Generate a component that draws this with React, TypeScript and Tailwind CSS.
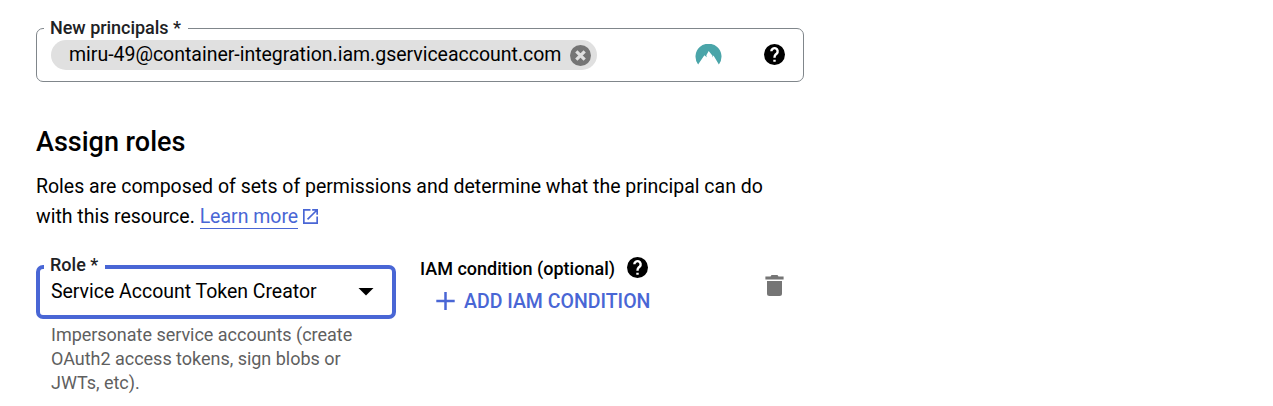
import type { ReactNode } from 'react';

function HelpIcon() {
  return (
    <svg viewBox="2 2 20 20" className="size-[21px] shrink-0" aria-hidden="true">
      <circle cx="12" cy="12" r="10" fill="#000" />
      <path d="M9 9a3 3 0 1 1 5.1 2.1l-1.1 1.1c-.7.7-1 1.2-1 2.8M12 17v2" fill="none" stroke="#fff" strokeWidth="2.3" />
    </svg>
  );
}

function CancelIcon() {
  return (
    <svg viewBox="2 2 20 20" className="size-[21px] shrink-0" aria-hidden="true">
      <circle cx="12" cy="12" r="10" fill="#757575" />
      <path d="M8 8l8 8M16 8l-8 8" stroke="#e0e0e0" strokeWidth="3" />
    </svg>
  );
}

function MountainIcon() {
  return (
    <svg viewBox="-0.5 0 27 21" className="h-[21px] w-[27px] shrink-0" aria-hidden="true">
      <path d="M2.6 20.5A13 13 0 1 1 23.4 20.5L18 11.5L16.6 13.4L17 11.8L13.2 7L10.8 11.2L11.3 13.2L8.9 11.3Z" fill="#4aa5a9" />
    </svg>
  );
}

function OpenIcon() {
  return (
    <svg viewBox="3 3 18 18" className="size-[15px] shrink-0" aria-hidden="true">
      <path d="M19 19H5V5h7V3H3v18h18v-9h-2v7zM14 3v2h3.59l-9.83 9.83 1.41 1.41L19 6.41V10h2V3h-7z" fill="#4966d5" />
    </svg>
  );
}

function FieldLabel({ children, className }: { children: ReactNode; className: string }) {
  return (
    <span className={`absolute bg-white px-1.5 text-[18px] leading-[22px] font-medium whitespace-nowrap text-[#202124] ${className}`}>
      {children}
    </span>
  );
}

export default function App() {
  return (
    <main className="h-[406px] w-full overflow-hidden bg-white pt-7 pl-9 font-[Roboto,sans-serif] text-black">
      <section className="relative flex h-[54px] w-[768px] items-center rounded-[7px] border border-[#80868b] pr-[18px] pl-3.5">
        <FieldLabel className="-top-3 left-[7px] w-[144px] tracking-[-0.03px]">New principals *</FieldLabel>
        <div className="flex h-[30px] items-center rounded-full bg-[#e0e0e0] pr-1.5 pl-[18px]">
          <span className="w-[501px] text-[19.5px] leading-[30px] tracking-[-0.015px] whitespace-nowrap">
            miru-49@container-integration.iam.gserviceaccount.com
          </span>
          <CancelIcon />
        </div>
        <div className="mb-px ml-auto flex items-center gap-[42px]">
          <MountainIcon />
          <HelpIcon />
        </div>
      </section>

      <h2 className="mt-11 text-[27px] leading-8 font-medium">Assign roles</h2>

      <p className="mt-3.5 w-[768px] text-[19.5px] leading-[30px] tracking-[-0.008px]">
        Roles are composed of sets of permissions and determine what the principal can do
        <span className="flex h-[30px] items-start">
          <span>with this resource.&nbsp;</span>
          <a className="h-[27px] border-b border-[#4966d5] leading-[30px] text-[#4966d5]">Learn more</a>
          <span className="mt-[7px] ml-[5px] flex"><OpenIcon /></span>
        </span>
      </p>

      <div className="mt-[33px] flex">
        <div className="w-[360px]">
          <div className="relative flex h-[54px] items-center justify-between rounded-[7px] border-4 border-[#4966d5] pr-[18px] pl-[11px]">
            <FieldLabel className="-top-[15px] left-1 w-[61px]">Role *</FieldLabel>
            <span className="text-[19.5px] leading-[30px] tracking-[-0.025px]">Service Account Token Creator</span>
            <svg viewBox="0 0 16 8" className="h-2 w-4" aria-hidden="true">
              <path d="M.5 0h15L8 7.5z" fill="#000" />
            </svg>
          </div>
          <p className="mt-1 pl-[15px] text-[18px] leading-6 tracking-[-0.02px] text-[#5f5f5f]">
            Impersonate service accounts (create
            <br />
            OAuth2 access tokens, sign blobs or
            <br />
            JWTs, etc).
          </p>
        </div>

        <div className="-mt-2 ml-6 w-[344px]">
          <div className="flex h-[22px] items-start gap-3 text-[18px] leading-6 font-medium">
            <span>IAM condition (optional)</span>
            <HelpIcon />
          </div>
          <button className="mt-[11px] flex h-6 items-center pl-4 text-[19.5px] font-medium whitespace-nowrap text-[#4966d5]">
            <svg viewBox="0 0 19 18" className="mr-[9px] mb-[2px] h-[18px] w-[19px]" aria-hidden="true">
              <path d="M9.5 0v18M.3 9h18.4" stroke="#4966d5" strokeWidth="2.5" />
            </svg>
            ADD IAM CONDITION
          </button>
        </div>

        <svg viewBox="0 0 19 21" className="mt-2.5 ml-px h-[21px] w-[19px]" aria-hidden="true">
          <path d="M2 6h15v12.5a2.5 2.5 0 0 1-2.5 2.5h-10A2.5 2.5 0 0 1 2 18.5zM.4 1.5h5.1l1-1.5h6l1 1.5h5.1v3H.4z" fill="#757575" />
        </svg>
      </div>
    </main>
  );
}
